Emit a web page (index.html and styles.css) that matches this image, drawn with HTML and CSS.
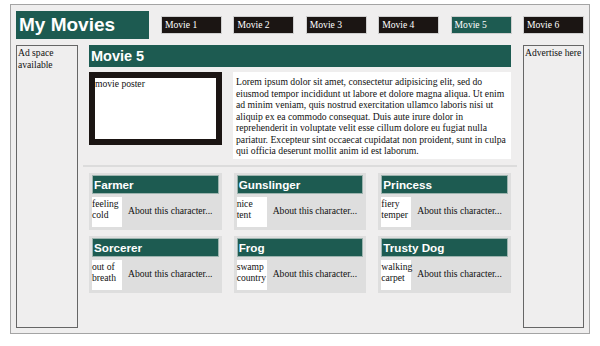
FILE: index.html
```html
<!DOCTYPE html>
<html lang="en">

<head>
    <meta charset="UTF-8">
    <meta name="viewport" content="width=device-width, initial-scale=1.0">
    <title>My Movies</title>
    <link rel="stylesheet" href="styles.css">
</head>

<body>
    <div class="frame">
        <header class="top">
            <h1 class="logo">My Movies</h1>
            <nav class="nav">
                <a class="nav-item" href="#">Movie 1</a>
                <a class="nav-item" href="#">Movie 2</a>
                <a class="nav-item" href="#">Movie 3</a>
                <a class="nav-item" href="#">Movie 4</a>
                <a class="nav-item active" href="#">Movie 5</a>
                <a class="nav-item" href="#">Movie 6</a>
            </nav>
        </header>

        <div class="page">
            <aside class="ad">Ad space available</aside>

            <main class="main">
                <h2 class="movie-title">Movie 5</h2>

                <div class="movie">
                    <div class="poster">
                        <div class="poster-inner">movie poster</div>
                    </div>
                    <p class="synopsis">Lorem ipsum dolor sit amet, consectetur adipisicing elit, sed do<br>
                        eiusmod tempor incididunt ut labore et dolore magna aliqua. Ut enim<br>
                        ad minim veniam, quis nostrud exercitation ullamco laboris nisi ut<br>
                        aliquip ex ea commodo consequat. Duis aute irure dolor in<br>
                        reprehenderit in voluptate velit esse cillum dolore eu fugiat nulla<br>
                        pariatur. Excepteur sint occaecat cupidatat non proident, sunt in culpa<br>
                        qui officia deserunt mollit anim id est laborum.</p>
                </div>

                <hr class="divider">

                <div class="cast">
                    <div class="card">
                        <h3 class="card-title">Farmer</h3>
                        <div class="card-body">
                            <div class="thumb">feeling cold</div>
                            <span class="about">About this character...</span>
                        </div>
                    </div>
                    <div class="card">
                        <h3 class="card-title">Gunslinger</h3>
                        <div class="card-body">
                            <div class="thumb">nice tent</div>
                            <span class="about">About this character...</span>
                        </div>
                    </div>
                    <div class="card">
                        <h3 class="card-title">Princess</h3>
                        <div class="card-body">
                            <div class="thumb">fiery temper</div>
                            <span class="about">About this character...</span>
                        </div>
                    </div>
                    <div class="card">
                        <h3 class="card-title">Sorcerer</h3>
                        <div class="card-body">
                            <div class="thumb">out of breath</div>
                            <span class="about">About this character...</span>
                        </div>
                    </div>
                    <div class="card">
                        <h3 class="card-title">Frog</h3>
                        <div class="card-body">
                            <div class="thumb">swamp country</div>
                            <span class="about">About this character...</span>
                        </div>
                    </div>
                    <div class="card">
                        <h3 class="card-title">Trusty Dog</h3>
                        <div class="card-body">
                            <div class="thumb">walking carpet</div>
                            <span class="about">About this character...</span>
                        </div>
                    </div>
                </div>
            </main>

            <aside class="ad">Advertise here</aside>
        </div>
    </div>
</body>

</html>
```

FILE: styles.css
```css
body {
    margin: 0;
    background-color: #fff;
    font-family: "Liberation Serif", "Times New Roman", serif;
    font-size: 9.6px;
    color: #111;
}

/* Outer page box */
.frame {
    box-sizing: border-box;
    width: 580px;
    height: 330px;
    margin: 4px 0 0 10px;
    padding: 6px 5px 5px 5px;
    border: 1px solid #a4a4a4;
    background-color: #efeeee;
    display: flex;
    flex-direction: column;
    gap: 6px;
}

/* Title + menu */
.top {
    display: flex;
    align-items: center;
    gap: 12px;
    height: 28px;
}

.logo {
    margin: 0;
    width: 133px;
    height: 28px;
    line-height: 28px;
    padding-left: 3px;
    box-sizing: border-box;
    background-color: #1d5b51;
    color: #fff;
    font-family: "Liberation Sans", Arial, sans-serif;
    font-size: 19px;
    font-weight: bold;
}

.nav {
    flex: 1;
    display: flex;
    justify-content: space-between;
}

.nav-item {
    box-sizing: border-box;
    width: 61px;
    height: 18px;
    line-height: 16px;
    padding-left: 3px;
    border: 1px solid #cfcfcf;
    background-color: #1b1513;
    color: #fff;
    text-decoration: none;
    font-size: 9.6px;
}

.nav-item.active {
    background-color: #1d5b51;
}

/* Three columns */
.page {
    flex: 1;
    display: grid;
    grid-template-columns: 62px 1fr 61px;
    column-gap: 11px;
    min-height: 0;
}

.ad {
    box-sizing: border-box;
    height: 283px;
    border: 1px solid #666;
    padding: 1px 0 0 1px;
    line-height: 12px;
    font-size: 9.6px;
}

.main {
    margin-right: 1px;
    display: flex;
    flex-direction: column;
}

.movie-title {
    margin: 0;
    height: 22px;
    line-height: 22px;
    padding-left: 2px;
    background-color: #1d5b51;
    color: #fff;
    font-family: "Liberation Sans", Arial, sans-serif;
    font-size: 14.5px;
    font-weight: bold;
}

.movie {
    margin-top: 5px;
    display: grid;
    grid-template-columns: 133px 1fr;
    column-gap: 11px;
    align-items: start;
}

.poster {
    height: 73px;
    box-sizing: border-box;
    border: 6px solid #1b1513;
    background-color: #fff;
}

.poster-inner {
    line-height: 11px;
}

.synopsis {
    margin: 0;
    height: 87px;
    box-sizing: border-box;
    padding: 4px 3px 0 3px;
    background-color: #fff;
    font-size: 9.7px;
    line-height: 11.5px;
    white-space: nowrap;
}

.divider {
    margin: 6px -6px;
    border: 0;
    border-top: 2px solid #dcdcdc;
}

/* Character cards */
.cast {
    display: grid;
    grid-template-columns: repeat(3, 1fr);
    column-gap: 12px;
    row-gap: 6px;
}

.card {
    background-color: #dedede;
    padding: 2px 3px 3px 3px;
}

.card-title {
    margin: 0;
    height: 19px;
    box-sizing: border-box;
    line-height: 17px;
    padding-left: 1px;
    border: 1px solid #9cb3ae;
    background-color: #1d5b51;
    color: #fff;
    font-family: "Liberation Sans", Arial, sans-serif;
    font-size: 11.7px;
    font-weight: bold;
}

.card-body {
    margin-top: 3px;
    display: flex;
    align-items: center;
    gap: 6px;
}

.thumb {
    width: 30px;
    height: 30px;
    background-color: #fff;
    line-height: 11px;
    font-size: 9.6px;
    padding-top: 1px;
    box-sizing: border-box;
}

.about {
    font-size: 9.6px;
    margin-top: -3px;
}
```
